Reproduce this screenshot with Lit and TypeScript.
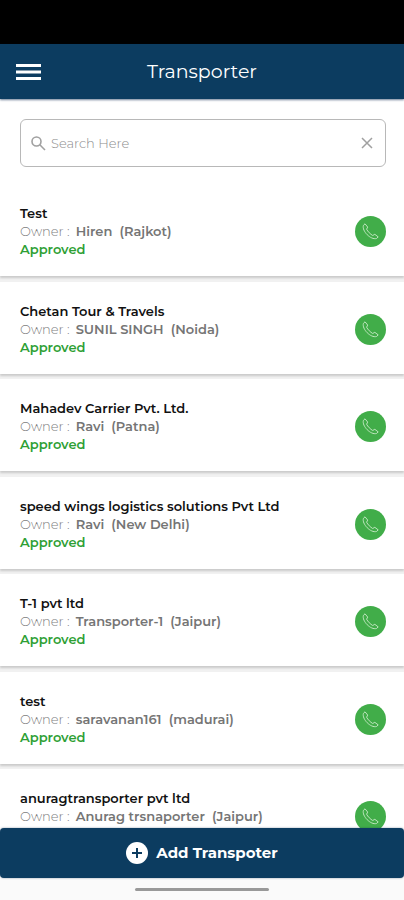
import { LitElement, html, css } from "lit";
import { customElement, property, state } from "lit/decorators.js";

interface Transporter {
  name: string;
  owner: string;
  city: string;
  status: string;
}

const TRANSPORTERS: Transporter[] = [
  { name: "Test", owner: "Hiren", city: "Rajkot", status: "Approved" },
  { name: "Chetan Tour & Travels", owner: "SUNIL SINGH", city: "Noida", status: "Approved" },
  { name: "Mahadev Carrier Pvt. Ltd.", owner: "Ravi", city: "Patna", status: "Approved" },
  { name: "speed wings logistics solutions Pvt Ltd", owner: "Ravi", city: "New Delhi", status: "Approved" },
  { name: "T-1 pvt ltd", owner: "Transporter-1", city: "Jaipur", status: "Approved" },
  { name: "test", owner: "saravanan161", city: "madurai", status: "Approved" },
  { name: "anuragtransporter pvt ltd", owner: "Anurag trsnaporter", city: "Jaipur", status: "Approved" },
];

@customElement("transporter-card")
export class TransporterCard extends LitElement {
  @property({ attribute: false }) item!: Transporter;

  static styles = css`
    :host {
      display: flex;
      align-items: center;
      justify-content: space-between;
      gap: 16px;
      padding: 20px 18px 18px 20px;
      background: #fff;
      box-shadow: 0 2px 2px rgba(0, 0, 0, 0.16);
    }
    .info {
      min-width: 0;
      line-height: 18px;
    }
    .name,
    .owner,
    .status {
      margin: 0;
      font-size: 13px;
      font-weight: 600;
      white-space: pre;
    }
    .name {
      color: #111;
    }
    .owner {
      color: #757575;
    }
    .label {
      font-weight: 300;
      color: #808080;
      margin-right: 6px;
    }
    .status {
      color: #2e9f35;
    }
    .call {
      flex: none;
      display: grid;
      place-items: center;
      width: 31px;
      height: 31px;
      padding: 0;
      border: 0;
      border-radius: 50%;
      background: #41ad49;
      color: #bfe6be;
      cursor: pointer;
    }
  `;

  render() {
    const { name, owner, city, status } = this.item;
    return html`
      <div class="info">
        <h2 class="name">${name}</h2>
        <p class="owner"><span class="label">Owner :</span>${owner}  (${city})</p>
        <p class="status">${status}</p>
      </div>
      <button class="call" aria-label="Call ${name}">
        <svg width="17" height="17" viewBox="0 0 17 17" fill="none" stroke="currentColor" stroke-width="1" stroke-linejoin="round">
          <path d="M3 .8 1.4 2.4C.6 5.300 2.400 8.900 5.200 11.700 8 14.500 11.500 16.300 14.500 15.500L16.200 13.900 12.800 11.300 10.700 12.500C8.500 11.300 5.700 8.500 4.600 6.200L5.700 4.100Z" />
        </svg>
      </button>
    `;
  }
}

@customElement("app-root")
export class AppRoot extends LitElement {
  @state() private query = "";

  static styles = css`
    :host {
      display: flex;
      flex-direction: column;
      height: 100vh;
      background: #fff;
      font-family: Montserrat, Inter, "Open Sans", sans-serif;
    }
    .status-bar {
      flex: none;
      height: 44px;
      background: #000;
    }
    .header {
      flex: none;
      display: grid;
      grid-template-columns: 1fr auto 1fr;
      align-items: center;
      height: 55px;
      padding: 0 16px;
      background: #0c3c60;
      box-shadow: 0 1px 2px rgba(12, 40, 80, 0.6);
      color: #fff;
    }
    .menu {
      justify-self: start;
      display: block;
      padding: 0;
      border: 0;
      background: none;
      color: #fff;
      cursor: pointer;
    }
    .menu svg,
    .clear svg {
      display: block;
    }
    .title {
      margin: 0;
      font-size: 19px;
      line-height: 24px;
      font-weight: 400;
    }
    .content {
      flex: 1;
      min-height: 0;
      overflow: hidden auto;
      scrollbar-width: none;
    }
    .search {
      display: flex;
      align-items: center;
      gap: 5px;
      height: 48px;
      margin: 20px 18px 17px 20px;
      padding: 0 12px 0 10px;
      box-sizing: border-box;
      border: 1px solid #b8b8b8;
      border-radius: 6px;
      color: #a0a0a0;
    }
    .search svg {
      flex: none;
    }
    .field {
      flex: 1;
      min-width: 0;
      padding: 0;
      border: 0;
      outline: 0;
      background: none;
      font-family: inherit;
      font-size: 13px;
      line-height: 18px;
      font-weight: 300;
      color: #444;
    }
    .field::placeholder {
      color: #8c8c8c;
      opacity: 1;
    }
    .clear {
      padding: 0;
      border: 0;
      background: none;
      color: inherit;
      cursor: pointer;
    }
    .list {
      display: grid;
      gap: 5px;
      margin: 0;
      padding: 0;
      list-style: none;
      background: #f1f1f1;
    }
    .row:nth-child(even) {
      padding-top: 1px;
    }
    .add {
      flex: none;
      display: flex;
      align-items: center;
      justify-content: center;
      gap: 8px;
      height: 50px;
      padding: 0;
      border: 0;
      border-radius: 4px;
      background: #0c3c60;
      color: #fff;
      font-family: inherit;
      font-size: 15px;
      line-height: 24px;
      font-weight: 700;
      cursor: pointer;
      box-shadow: 0 0 2px rgba(12, 40, 80, 0.5);
      z-index: 1;
    }
    .system-nav {
      flex: none;
      display: flex;
      justify-content: center;
      align-items: center;
      height: 22px;
      background: #fafafa;
    }
    .handle {
      width: 33%;
      height: 3px;
      border-radius: 2px;
      background: #999;
    }
  `;

  private onInput(event: Event) {
    this.query = (event.target as HTMLInputElement).value;
  }

  private clear() {
    this.query = "";
  }

  render() {
    const query = this.query.toLowerCase();
    const items = TRANSPORTERS.filter((t) => t.name.toLowerCase().includes(query));
    return html`
      <div class="status-bar"></div>
      <header class="header">
        <button class="menu" aria-label="Menu">
          <svg width="25" height="18" viewBox="0 0 25 18" fill="currentColor">
            <path d="M0 1h25v3H0zM0 7.500h25v3H0zM0 14h25v3H0z" />
          </svg>
        </button>
        <h1 class="title">Transporter</h1>
      </header>
      <main class="content">
        <div class="search">
          <svg width="15" height="15" viewBox="0 0 15 15" fill="none" stroke="currentColor" stroke-width="1.600">
            <circle cx="5.500" cy="5.500" r="4.500" />
            <path d="m8.800 8.800 5.200 5.200" />
          </svg>
          <input class="field" type="text" aria-label="Search" placeholder="Search Here" .value=${this.query} @input=${this.onInput} />
          <button class="clear" aria-label="Clear search" @click=${this.clear}>
            <svg width="12" height="12" viewBox="0 0 12 12" fill="none" stroke="currentColor" stroke-width="1.500">
              <path d="m1 1 10 10M11 1 1 11" />
            </svg>
          </button>
        </div>
        <ul class="list">
          ${items.map((item) => html`<li class="row"><transporter-card .item=${item}></transporter-card></li>`)}
        </ul>
      </main>
      <button class="add">
        <svg width="22" height="22" viewBox="0 0 22 22">
          <circle cx="11" cy="11" r="11" fill="#fff" />
          <path d="M11 6v10M6 11h10" stroke="#0c3c60" stroke-width="2" />
        </svg>
        Add Transpoter
      </button>
      <div class="system-nav"><div class="handle"></div></div>
    `;
  }
}
